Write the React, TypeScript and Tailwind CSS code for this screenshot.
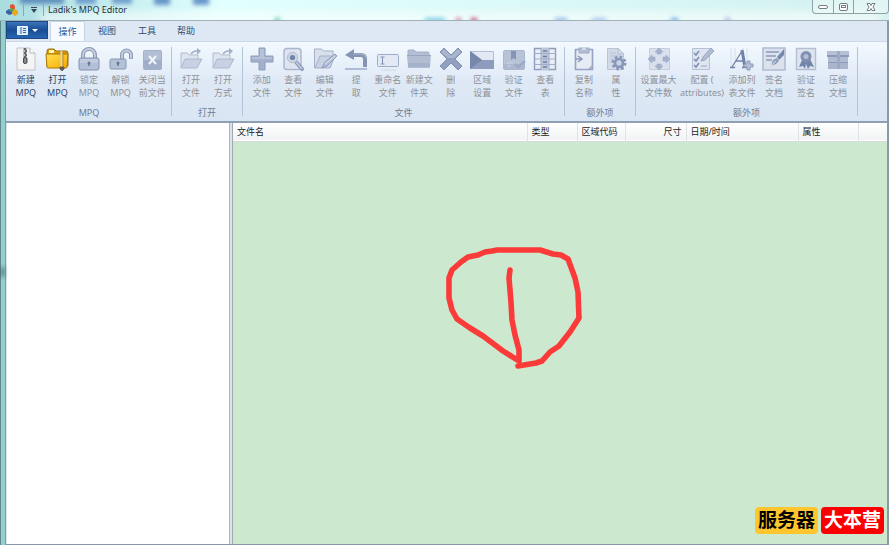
import type { ReactNode } from "react";

type Tool = { lines: [string, string]; icon: ReactNode; active?: boolean; width?: string };
type Group = { label: string; width: string; tools: Tool[] };

const INK = "#8795b5";
const EDGE = "#a3b0ca";

function Icon({ children }: { children: ReactNode }) {
  return (
    <svg viewBox="0 0 24 24" className="size-6 shrink-0" fill="none" aria-hidden="true">
      {children}
    </svg>
  );
}

const newArchive = (
  <Icon>
    <path d="M3 1h13l5 5v17H3z" fill="#f4f4f4" stroke="#c2c4c8" />
    <path d="M16 1v5h5" fill="#fff" stroke="#b4b6ba" />
    <path d="M9 1h4v15H9z" fill="#b9bcc0" />
    <path d="M10 2h2M11 4h2M10 6h2M11 8h2M10 10h2" stroke="#4b4e52" strokeWidth="1.5" />
    <rect x="9.5" y="10.5" width="3.5" height="6" rx="1.5" fill="#85888c" stroke="#45484c" />
  </Icon>
);

const openArchive = (
  <Icon>
    <path d="M2 4q0-2 2-2h5l2 2h10q2 0 2 2v13H2z" fill="#dd9b08" stroke="#987014" />
    <path d="M4 3h5v3H4z" fill="#fff3b8" />
    <path d="M1 7h22l-1 13q0 1-1 1H3q-1 0-1-1z" fill="url(#gold)" stroke="#a87809" />
    <path d="M16.5 4v16" stroke="#e3d7ac" strokeWidth="2" />
    <path d="M18 4v16" stroke="#b68b2a" />
    <path d="M15 20h4v2l-2 2-2-2z" fill="#66625b" stroke="#48453f" strokeWidth=".7" />
    <defs>
      <linearGradient id="gold" x1="0" y1="0" x2="1" y2="1">
        <stop stopColor="#ffe254" />
        <stop offset="1" stopColor="#f6a900" />
      </linearGradient>
    </defs>
  </Icon>
);

const lock = (
  <Icon>
    <path d="M6 12V8a6 6 0 0 1 12 0v4" stroke="#8a98b5" strokeWidth="4" />
    <path d="M6 12V8a6 6 0 0 1 12 0v4" stroke="#c6cfdf" strokeWidth="1.8" />
    <rect x="2" y="11" width="20" height="12" rx="2" fill="#b3bfd6" stroke="#8492b0" />
    <path d="M3 12h18v4H3z" fill="#c9d2e3" opacity=".6" />
    <path d="M12 15v4" stroke="#65769b" strokeWidth="1.5" />
    <circle cx="12" cy="16" r="1.5" fill="#65769b" />
  </Icon>
);

const unlock = (
  <Icon>
    <path d="M13 12V8a4.500 4.500 0 0 1 9 0v4" stroke="#8f9dba" strokeWidth="4" />
    <path d="M13 12V8a4.500 4.500 0 0 1 9 0v3.500" stroke="#c6cfdf" strokeWidth="1.8" />
    <rect x="1" y="12" width="16" height="10" rx="1.5" fill="#b5c1d7" stroke="#8695b3" />
    <path d="M9 15v4" stroke="#65769b" strokeWidth="1.5" />
    <circle cx="9" cy="16" r="1.500" fill="#65769b" />
  </Icon>
);

const closeFile = (
  <Icon>
    <rect x="3.5" y="3.5" width="18" height="19" rx="1" fill="#b3bed5" stroke="#a3b0c9" />
    <path d="M4 13h17v9H4z" fill="#95a4c2" opacity=".6" />
    <path d="m9 9 7 8m0-8-7 8" stroke="#f2f5fa" strokeWidth="2" />
  </Icon>
);

const openFolder = (
  <Icon>
    <path d="M2 21V6h6l2 2h9v4" fill="#dfe5f0" stroke="#b1bcd2" />
    <path d="m2 21 4-9h17l-5 9z" fill="#c8d1e3" stroke="#acb8cf" />
    <path d="M12 7q3-4 8-3" stroke={EDGE} strokeWidth="1.5" />
    <path d="m18 1 4 3-4 4z" fill={EDGE} />
  </Icon>
);

const plus = (
  <Icon>
    <path d="M9 1h6v8h8v6h-8v8H9v-8H1V9h8z" fill="#a3b0cb" stroke="#8f9ebd" />
    <path d="M10 2h4v8h8v2H2v-2h8z" fill="#b7c2d8" />
  </Icon>
);

const viewFile = (
  <Icon>
    <rect x="3" y="1.5" width="17" height="21" rx="3" fill="#dfe5f0" stroke="#aab6ce" strokeWidth="1.4" />
    <path d="m15 15 6 7" stroke="#8c9bbb" strokeWidth="4" strokeLinecap="round" />
    <path d="m15 15 6 7" stroke="#c0cadd" strokeWidth="1.6" />
    <circle cx="11.5" cy="10.5" r="5.2" fill="#ccd5e4" stroke="#b0bcd1" />
    <circle cx="11.5" cy="10.5" r="2.6" fill="#7183aa" />
  </Icon>
);

const editFile = (
  <Icon>
    <path d="M1.500 21V2h7l2 2H20v4" fill="#d9e0ec" stroke={EDGE} />
    <path d="m2 21 5-12h15l-5 12z" fill="#c9d2e4" stroke={EDGE} />
    <path d="m9 21 3-6L22 7l2 2-10 10z" fill="#b3bfd6" stroke="#8f9ebc" />
    <path d="m12 17 10-8" stroke="#e1e7f0" />
  </Icon>
);

const extract = (
  <Icon>
    <path d="M8 8h9q4 0 4 4v8" stroke={INK} strokeWidth="4" />
    <path d="m1 8 9-6v11z" fill={INK} />
    <path d="M1 22h22" stroke="#9eabc7" strokeWidth="1.5" />
    <path d="M9 7h8q4 0 5 4" stroke="#a8b4cd" />
  </Icon>
);

const rename = (
  <Icon>
    <rect x="1.5" y="7.5" width="21" height="12" rx="1" fill="#e3e9f3" stroke="#9eacc7" />
    <path d="M4.500 10h4m-2 0v7m-2 0h4" stroke="#8291b2" />
    <path d="M5 23h15" stroke="#d0d8e6" />
  </Icon>
);

const newFolder = (
  <Icon>
    <path d="M1 4q0-1 1-1h5l2 2h12q1 0 1 1v5H1z" fill="#b4bfd5" stroke="#a4b0c9" />
    <path d="M0 8h24l-1 12q0 1-1 1H2q-1 0-1-1z" fill="#b2bdd3" />
    <path d="M1 16h22v4H1z" fill="#a5b2cb" />
    <path d="M0 8h24v1H0z" fill="#98a6c2" />
  </Icon>
);

const remove = (
  <Icon>
    <path d="m1 5 4-4 7 7 7-7 4 4-7 7 7 7-4 4-7-7-7 7-4-4 7-7z" fill="#91a0bf" stroke="#8291b3" />
    <path d="m2 5 3-3 7 7 7-7 3 3-7 6H9z" fill="#aab6ce" />
  </Icon>
);

const locale = (
  <Icon>
    <path d="M.500 4.500h23v17H.500z" fill="#e3e9f4" stroke="#b4bfd4" />
    <path d="M0 4v18h24v-9H12z" fill="#8d9cbc" />
    <path d="M0 4v18l12-9z" fill="#7788ad" />
  </Icon>
);

const verifyFile = (
  <Icon>
    <rect x="1.5" y="3.5" width="21" height="19" rx="1.5" fill="#b8c3d7" stroke="#abb7cf" />
    <path d="M2 17h20v5H2z" fill="#acb8cf" />
    <path d="M9 4h5v9l-2.500-2L9 13z" fill="#8594b5" />
    <path d="M5 16h5M5 19h4" stroke="#cbd4e3" />
    <path d="m13 17 3 3 7-6" stroke="#9caac6" strokeWidth="2.5" />
  </Icon>
);

const table = (
  <Icon>
    <path d="M1.500 1.500h21v21h-21z" fill="#e9eef6" stroke="#8e9dbb" strokeWidth="1.4" />
    <path d="M8 1h8v22H8z" fill="#bdc7da" />
    <path d="M1 6.500h22M1 12h22M1 17.500h22M8 1v22M16 1v22" stroke="#a2aeca" />
    <path d="M10 4h4M10 9.500h4M10 15h4M10 20h4" stroke="#6d7fa5" strokeWidth="1.5" />
  </Icon>
);

const copyName = (
  <Icon>
    <path d="M3.500 2.500h17v20h-17z" fill="#e6ebf4" stroke="#96a4c1" strokeWidth="1.6" />
    <path d="M7 1h10v5H7z" fill="#b2bdd3" stroke="#9caac5" />
    <path d="M10 0h4v3h-4z" fill="#d2d9e7" />
    <path d="M3 12h6m-3-3 4 3-4 3" stroke="#8b9aba" strokeWidth="1.5" />
    <path d="m20 18-4 4h4z" fill="#a6b3cb" />
  </Icon>
);

const properties = (
  <Icon>
    <path d="M3.500 1.500h11l5 5v16h-16z" fill="#d2dae8" stroke="#b9c4d7" />
    <path d="M14 1v6h6M6 6h6M6 9h9M6 12h6M6 15h4" stroke="#b4bfd4" />
    <circle cx="15" cy="16" r="6" stroke="#8796b7" strokeWidth="3" strokeDasharray="2.4 2.3" />
    <circle cx="15" cy="16" r="4" fill="#c9d2e2" stroke="#8796b7" strokeWidth="2.6" />
  </Icon>
);

const maxFiles = (
  <Icon>
    <path d="M2.500 1.500h20v21h-20z" fill="#dae1ee" stroke="#c5cede" />
    <path
      d="m12 1 4 4h-2v2h-4V5H8zM12 23l4-4h-2v-2h-4v2H8zM1 12l4-4v2h3v4H5v2zM23 12l-4-4v2h-3v4h3v2z"
      fill="#a5b2cb"
      stroke="#93a2bf"
      strokeWidth=".5"
    />
  </Icon>
);

const configure = (
  <Icon>
    <path d="M2.500 1.500h17v21h-17z" fill="#dfe5f0" stroke="#b7c1d5" />
    <path d="m4 6 2 2 3-4M4 12l2 2 3-4M4 18l2 2 3-4" stroke="#7e8eb1" strokeWidth="1.5" />
    <path d="M11 19h6" stroke="#99a7c3" />
    <path d="m11 14 2-4L21 1l3 3-9 9z" fill="#b1bdd4" stroke="#97a5c1" />
  </Icon>
);

const addListFile = (
  <Icon>
    <path d="M1 1v20M5 1v20M13 1v20M17 1v12" stroke="#d8e0ec" />
    <path d="m2 20 10-16M5.500 14h9M0 20.500h5m7 0h6" stroke="#7182a6" strokeWidth="1.300" />
    <path d="m12 3 3 17" stroke="#7182a6" strokeWidth="3" />
    <path d="M17 14h3v3h3v3h-3v3h-3v-3h-3v-3h3z" fill="#b4bfd5" stroke="#8b9ab9" />
  </Icon>
);

const signDocument = (
  <Icon>
    <path d="M1 1h22v22H1z" fill="#dbe2ed" stroke="#b1bcd1" strokeWidth="1.6" />
    <path d="M4 5h13M4 9h10M4 13h6" stroke="#8b9aba" strokeWidth="1.5" />
    <path d="m9 19 2-6 4-2 2 3-3 3z" fill="#8e9dbc" />
    <path d="m15 10 7-8v6l-5 5z" fill="#7587ac" />
    <path d="m9 19 5-5" stroke="#dbe2ed" />
  </Icon>
);

const verifySign = (
  <Icon>
    <path d="M2.500 1.500h19v21h-19z" fill="#dfe5f0" stroke="#b4bfd3" strokeWidth="1.4" />
    <path d="m8 13-3 7 4-1 2 3 1-5 2 5 2-3 4 1-4-8z" fill="#7285ab" />
    <circle cx="12" cy="9.5" r="5.5" fill="#8190b2" />
    <circle cx="12" cy="9.5" r="2.5" fill="#b4bfd3" />
  </Icon>
);

const compact = (
  <Icon>
    <path d="M1 4h22v5H1z" fill="#b5c0d5" />
    <path d="M1 8h22v2H1z" fill="#8a99b8" />
    <path d="M2 10h20v5H2z" fill="#b1bcd2" />
    <path d="M2 15h20v1H2z" fill="#8a99b8" />
    <path d="M2 16h20v6H2z" fill="#a9b5cd" />
    <path d="M11 4h3v18h-3z" fill="#9caac5" />
  </Icon>
);

const groups: Group[] = [
  {
    label: "MPQ",
    width: "w-[165px]",
    tools: [
      { lines: ["新建", "MPQ"], icon: newArchive, active: true },
      { lines: ["打开", "MPQ"], icon: openArchive, active: true },
      { lines: ["锁定", "MPQ"], icon: lock },
      { lines: ["解锁", "MPQ"], icon: unlock },
      { lines: ["关闭当", "前文件"], icon: closeFile },
    ],
  },
  {
    label: "打开",
    width: "w-[71px]",
    tools: [
      { lines: ["打开", "文件"], icon: openFolder },
      { lines: ["打开", "方式"], icon: openFolder },
    ],
  },
  {
    label: "文件",
    width: "w-[322px]",
    tools: [
      { lines: ["添加", "文件"], icon: plus },
      { lines: ["查看", "文件"], icon: viewFile },
      { lines: ["编辑", "文件"], icon: editFile },
      { lines: ["提", "取"], icon: extract },
      { lines: ["重命名", "文件"], icon: rename },
      { lines: ["新建文", "件夹"], icon: newFolder },
      { lines: ["删", "除"], icon: remove },
      { lines: ["区域", "设置"], icon: locale },
      { lines: ["验证", "文件"], icon: verifyFile },
      { lines: ["查看", "表"], icon: table },
    ],
  },
  {
    label: "额外项",
    width: "w-[71px]",
    tools: [
      { lines: ["复制", "名称"], icon: copyName },
      { lines: ["属", "性"], icon: properties },
    ],
  },
  {
    label: "额外项",
    width: "w-[222px]",
    tools: [
      { lines: ["设置最大", "文件数"], icon: maxFiles, width: "w-[39px]" },
      { lines: ["配置 (", "attributes)"], icon: configure, width: "w-[48px]" },
      { lines: ["添加列", "表文件"], icon: addListFile },
      { lines: ["签名", "文档"], icon: signDocument },
      { lines: ["验证", "签名"], icon: verifySign },
      { lines: ["压缩", "文档"], icon: compact },
    ],
  },
];

const columns = [
  { label: "文件名", width: "w-[294px]" },
  { label: "类型", width: "w-[50px]" },
  { label: "区域代码", width: "w-[48px]" },
  { label: "尺寸", width: "w-[61px]", align: "text-right" },
  { label: "日期/时间", width: "w-[112px]" },
  { label: "属性", width: "w-[60px]" },
];

function TitleBar() {
  return (
    <header className="relative flex h-[21px] shrink-0 items-center overflow-hidden border-b border-[#a2b1b6] bg-linear-to-r from-[#a9dbdf] via-[#e0fffe] via-25% to-[#d4f1ef] pl-[6px]">
      <div className="absolute inset-0" aria-hidden="true">
        <span className="absolute top-3 left-10 h-3 w-[840px] bg-white opacity-60 blur-xs" />
        <span className="absolute -top-1 left-5 h-2 w-11 bg-[#4c7fb5] opacity-80 blur-[2px]" />
        <span className="absolute -top-1 left-[76px] h-2 w-5 bg-[#4f7fc0] opacity-70 blur-[2px]" />
        <span className="absolute -top-1 left-[112px] h-2 w-5 bg-[#4f7fc0] opacity-70 blur-[2px]" />
        <span className="absolute -top-1 left-[154px] h-[9px] w-4 bg-[#4f7fc0] opacity-80 blur-[2px]" />
        <span className="absolute -top-1 left-[193px] h-[9px] w-4 bg-[#4f7fc0] opacity-80 blur-[2px]" />
        <span className="absolute top-[18px] left-[275px] h-1 w-[5px] bg-[#4fc795] blur-[2px]" />
        <span className="absolute top-[18px] left-[425px] h-1 w-5 bg-[#71cbe4] blur-[2px]" />
        <span className="absolute top-[18px] left-[456px] h-1 w-[5px] bg-[#cf7092] blur-[2px]" />
        <span className="absolute top-[18px] left-[471px] h-1 w-[6px] bg-[#c14361] blur-[2px]" />
        <span className="absolute top-[18px] left-[555px] h-1 w-[12px] bg-[#8bb8e8] blur-[2px]" />
        <span className="absolute top-[18px] left-[592px] h-1 w-[14px] bg-[#a5c3ea] blur-[2px]" />
        <span className="absolute top-[18px] left-[671px] h-1 w-[7px] bg-[#62a8e6] blur-[2px]" />
        <span className="absolute top-[18px] left-[725px] h-1 w-[5px] bg-[#a3a4dc] blur-[2px]" />
      </div>
      <svg viewBox="0 0 12 12" className="relative size-3" aria-hidden="true">
        <path d="m4 1 3-1 2 2v3L6 6 4 4z" fill="#de5635" />
        <path d="m0 7 3-2 3 2v3l-3 1-3-2z" fill="#3861b1" />
        <path d="m6 7 3-2 3 2v3l-3 2-3-2z" fill="#e6a921" />
        <path d="m3 6 3-2 2 2-2 2-2-1z" fill="#4ea450" />
      </svg>
      <span className="relative ml-[5px] h-3 border-l border-[#8ba6b5]" />
      <button type="button" aria-label="Customize" className="relative ml-[6px] flex size-2 flex-col items-center justify-center gap-px">
        <span className="h-px w-[6px] bg-[#38495b]" />
        <svg viewBox="0 0 6 4" className="h-1 w-[6px]" aria-hidden="true">
          <path d="M0 0h6L3 4z" fill="#38495b" />
        </svg>
      </button>
      <span className="relative ml-[5px] h-3 border-l border-[#8ba6b5]" />
      <h1 className="relative ml-[4px] text-[9px] text-[#25303b]">Ladik's MPQ Editor</h1>
      <div className="relative ml-auto flex h-[14px] self-start rounded-b border border-t-0 border-[#8da3a8] bg-white/30">
        <button type="button" aria-label="Minimize" className="flex w-[20px] items-center justify-center">
          <span className="h-[4px] w-[10px] rounded-xs border border-[#717d83] bg-white" />
        </button>
        <button type="button" aria-label="Maximize" className="flex w-[21px] items-center justify-center border-x border-[#8da3a8]">
          <span className="flex h-[8px] w-[9px] items-center justify-center rounded-xs border border-[#717d83] bg-white">
            <span className="h-[3px] w-[5px] border border-[#717d83]" />
          </span>
        </button>
        <button type="button" aria-label="Close" className="flex w-[34px] items-center justify-center">
          <svg viewBox="0 0 10 8" className="h-2 w-[10px]" aria-hidden="true">
            <path d="M1 .500h3l1 2 1-2h3L7 4l2 3.500H6l-1-2-1 2H1L3 4z" fill="#fff" stroke="#717d83" />
          </svg>
        </button>
      </div>
    </header>
  );
}

function Tabs() {
  return (
    <nav className="flex h-[20px] items-end bg-[#dde8f4] text-[9px] text-[#314a6e]">
      <button
        type="button"
        aria-label="Menu"
        className="flex h-[18px] w-[42px] items-center justify-center gap-1 self-start border border-[#1e4683] bg-linear-to-b from-[#3b74ba] via-[#194c94] to-[#2766b2]"
      >
        <svg viewBox="0 0 11 9" className="h-[9px] w-[11px]" aria-hidden="true">
          <path d="M.500.500h10v8H.500z" fill="#d9e7f7" stroke="#edf5ff" />
          <path d="M4 1v7M6 2.500h3M6 4.500h3M6 6.500h3" stroke="#386caa" />
        </svg>
        <svg viewBox="0 0 6 3" className="h-[3px] w-[6px]" aria-hidden="true">
          <path d="M0 0h6L3 3z" fill="#fff" />
        </svg>
      </button>
      <button type="button" className="ml-[2px] h-[20px] w-[35px] rounded-t-xs border border-b-0 border-[#c4d3e4] bg-[#f7fbff] text-[#2659a0]">
        操作
      </button>
      <button type="button" className="ml-[2px] h-[20px] w-[40px]">视图</button>
      <button type="button" className="h-[20px] w-[40px]">工具</button>
      <button type="button" className="h-[20px] w-[38px]">帮助</button>
    </nav>
  );
}

function ToolButton({ tool }: { tool: Tool }) {
  return (
    <button
      type="button"
      disabled={!tool.active}
      className={`flex flex-col items-center ${tool.width ?? "min-w-0 flex-1"} ${tool.active ? "text-[#2c4468]" : "text-[#8f9298]"}`}
    >
      {tool.icon}
      <span className="mt-[2px] whitespace-nowrap leading-[13px]">
        {tool.lines[0]}
        <br />
        {tool.lines[1]}
      </span>
    </button>
  );
}

function Ribbon() {
  return (
    <div className="flex h-[82px] border-t border-b-2 border-t-[#cbd8e7] border-b-[#8f9fb4] bg-linear-to-b from-[#f3f9fe] via-[#dfe9f6] via-50% to-[#dae5f3] pl-px text-[9px]">
      {groups.map((group, i) => (
        <section key={i} className={`flex ${group.width} shrink-0`}>
          <div className="flex min-w-0 flex-1 flex-col px-[3px] pt-[5px]">
            <div className="flex">
              {group.tools.map((tool, n) => (
                <ToolButton key={n} tool={tool} />
              ))}
            </div>
            <h2 className="mt-[7px] text-center leading-[13px] text-[#6e7d96]">{group.label}</h2>
          </div>
          <div className="my-[5px] w-px bg-[#b3c3d8]" />
        </section>
      ))}
    </div>
  );
}

function Scribble() {
  return (
    <svg
      viewBox="0 0 170 145"
      className="absolute top-[112px] left-[197px] h-[145px] w-[170px]"
      fill="none"
      stroke="#fb3b39"
      strokeWidth="5.6"
      strokeLinecap="round"
      strokeLinejoin="round"
      aria-hidden="true"
    >
      <path d="M80 35 79 43 81 67 82 85 85 100 89 115 89 126 73 116 53 101 40 93 27 84 22 75 19 63 19 43 22 35 31 27 38 22 48 20 55 17 62 16 67 15 110 15 123 19 131 20 138 24 145 43 148 57 149 83 140 97 129 111 120 117 112 126 106 128 88 131" />
    </svg>
  );
}

export default function App() {
  return (
    <div className="flex h-screen flex-col overflow-hidden bg-[#91d0ce] font-['Noto_Sans','Noto_Sans_CJK_SC',sans-serif]">
      <TitleBar />
      <div className="relative flex min-h-0 flex-1 flex-col border-r-2 border-l border-r-[#899ca2] border-l-[#62868b] pl-[4px]">
        <span className="absolute top-[246px] left-0 h-[10px] w-[3px] bg-[#2f5358] opacity-80 blur-[2px]" aria-hidden="true" />
        <div className="flex min-h-0 flex-1 flex-col border-b border-l border-[#8796aa]">
          <Tabs />
          <Ribbon />
          <main className="flex min-h-0 flex-1 bg-[#dce2ec]">
            <aside className="ml-px w-[223px] shrink-0 border-r border-[#aeb3bb] bg-white" />
            <section className="relative ml-[2px] min-w-0 flex-1 border-l border-[#9fa9ae] bg-[#cce9d0]">
              <table className="w-full table-fixed border-collapse text-[9px] text-[#222]">
                <thead>
                  <tr className="h-[18px] border-b border-[#d4dad7] bg-linear-to-b from-white to-[#f1f3f4]">
                    {columns.map((column) => (
                      <th
                        key={column.label}
                        className={`${column.width} ${column.align ?? "text-left"} border-r border-[#e0e3e6] px-1 font-normal whitespace-nowrap`}
                      >
                        {column.label}
                      </th>
                    ))}
                    <th />
                  </tr>
                </thead>
              </table>
              <Scribble />
              <div className="absolute right-[3px] bottom-[10px] flex gap-[3px] text-[19px] leading-[27px] font-bold">
                <span className="rounded bg-[#fdc52e] px-[3px] text-black">服务器</span>
                <span className="rounded bg-[#fb0000] px-[3px] text-white">大本营</span>
              </div>
            </section>
          </main>
        </div>
      </div>
    </div>
  );
}
